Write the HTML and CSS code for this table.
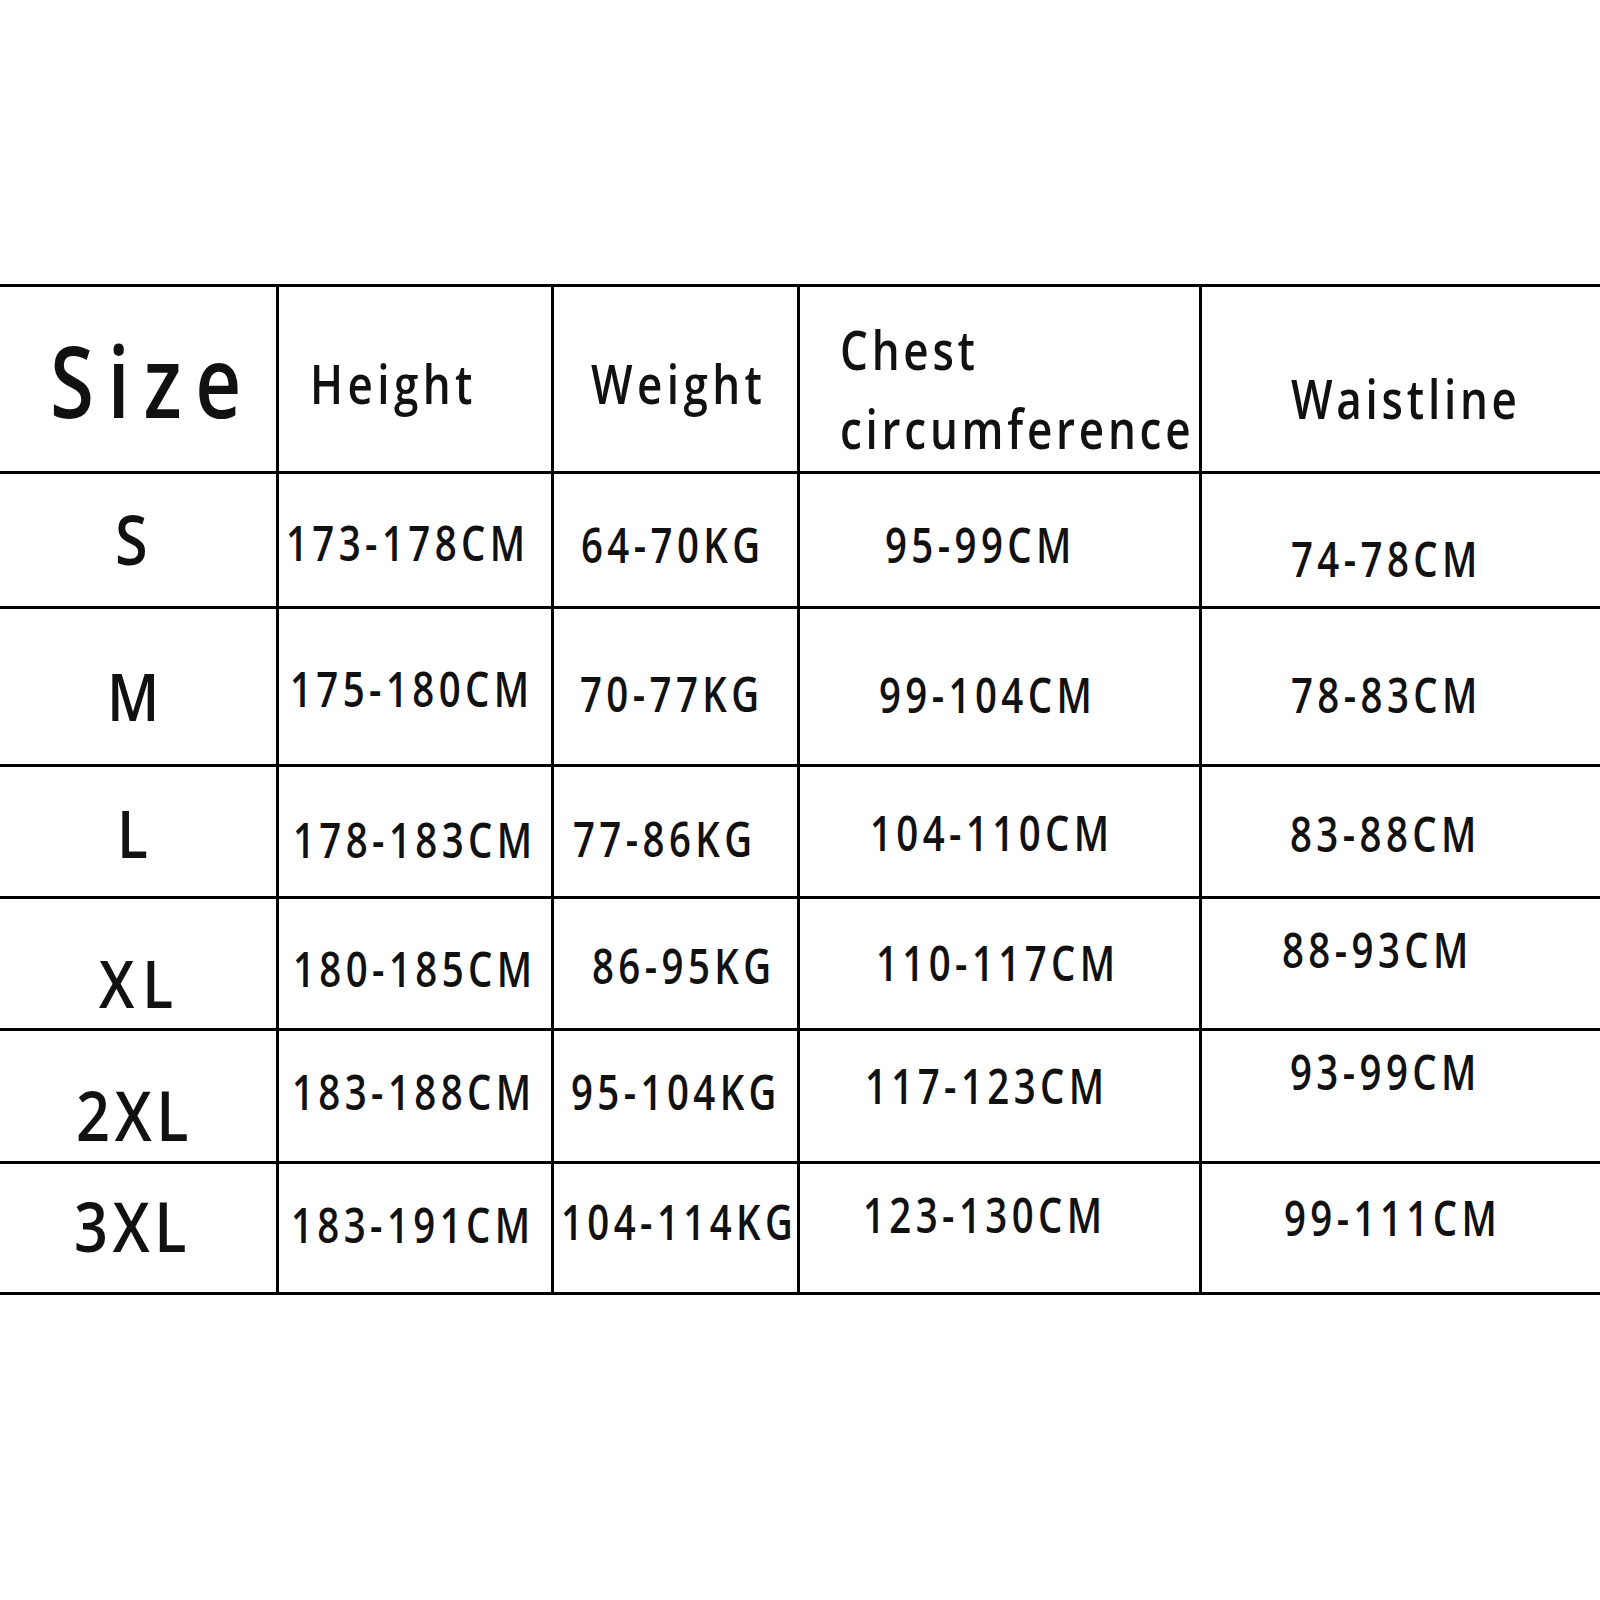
FILE: index.html
```html
<!DOCTYPE html>
<html lang="en">
<head>
<meta charset="utf-8">
<title>Size chart</title>
<link rel="stylesheet" href="styles.css">
</head>
<body>
<main class="page">
  <div class="chart">
    <div class="cell h-size"><span class="t label-xl">Size</span></div>
    <div class="cell h-height"><span class="t head">Height</span></div>
    <div class="cell h-weight"><span class="t head">Weight</span></div>
    <div class="cell h-chest"><span class="t head two">Chest<br>circumference</span></div>
    <div class="cell h-waist"><span class="t head tight">Waistline</span></div>

    <div class="cell s-l"><span class="t label big">S</span></div>
    <div class="cell s-h"><span class="t data">173-178CM</span></div>
    <div class="cell s-w"><span class="t data">64-70KG</span></div>
    <div class="cell s-c"><span class="t data">95-99CM</span></div>
    <div class="cell s-x"><span class="t data">74-78CM</span></div>

    <div class="cell m-l"><span class="t label">M</span></div>
    <div class="cell m-h"><span class="t data">175-180CM</span></div>
    <div class="cell m-w"><span class="t data">70-77KG</span></div>
    <div class="cell m-c"><span class="t data">99-104CM</span></div>
    <div class="cell m-x"><span class="t data">78-83CM</span></div>

    <div class="cell l-l"><span class="t label">L</span></div>
    <div class="cell l-h"><span class="t data">178-183CM</span></div>
    <div class="cell l-w"><span class="t data">77-86KG</span></div>
    <div class="cell l-c"><span class="t data">104-110CM</span></div>
    <div class="cell l-x"><span class="t data">83-88CM</span></div>

    <div class="cell xl-l"><span class="t label">XL</span></div>
    <div class="cell xl-h"><span class="t data">180-185CM</span></div>
    <div class="cell xl-w"><span class="t data">86-95KG</span></div>
    <div class="cell xl-c"><span class="t data">110-117CM</span></div>
    <div class="cell xl-x"><span class="t data">88-93CM</span></div>

    <div class="cell xxl-l"><span class="t label big">2XL</span></div>
    <div class="cell xxl-h"><span class="t data">183-188CM</span></div>
    <div class="cell xxl-w"><span class="t data">95-104KG</span></div>
    <div class="cell xxl-c"><span class="t data">117-123CM</span></div>
    <div class="cell xxl-x"><span class="t data">93-99CM</span></div>

    <div class="cell x3-l"><span class="t label big">3XL</span></div>
    <div class="cell x3-h"><span class="t data">183-191CM</span></div>
    <div class="cell x3-w"><span class="t data">104-114KG</span></div>
    <div class="cell x3-c"><span class="t data">123-130CM</span></div>
    <div class="cell x3-x"><span class="t data">99-111CM</span></div>
  </div>
</main>
</body>
</html>
```
FILE: styles.css
```css
html, body {
  margin: 0;
  padding: 0;
  background: #fff;
}

.page {
  width: 1600px;
  height: 1600px;
  padding-top: 284px;
  box-sizing: border-box;
  overflow: hidden;
}

.chart {
  display: grid;
  grid-template-columns: 276px 272px 243px 399px 398px;
  grid-template-rows: 184px 132px 155px 129px 129px 130px 128px;
  gap: 3px;
  padding: 3px 0;
  background: #000;
  width: 1600px;
}

.cell {
  background: #fff;
  box-sizing: border-box;
  overflow: visible;
  font-family: "Open Sans", "Noto Sans", sans-serif;
  color: #111;
}

.t {
  display: inline-block;
  white-space: nowrap;
  line-height: 1;
  transform: scaleX(0.8);
  transform-origin: 0 0;
  font-weight: 600;
}

.data {
  font-size: 48px;
  letter-spacing: 0.115em;
}

.head {
  font-size: 55px;
  letter-spacing: 0.1em;
}

.head.two,
.head.tight {
  letter-spacing: 0.085em;
}

.head.two {
  line-height: 79px;
}

.label-xl {
  font-size: 100px;
  letter-spacing: 0.17em;
}

.label {
  font-size: 66px;
  letter-spacing: 0.14em;
  transform: scaleX(0.86);
}

.label.big {
  font-size: 69px;
  letter-spacing: 0.08em;
}

/* header */
.h-size   { padding: 42px 0 0 50px; }
.h-height { padding: 68px 0 0 31px; }
.h-weight { padding: 68px 0 0 37px; }
.h-chest  { padding: 22px 0 0 40px; }
.h-waist  { padding: 83px 0 0 89px; }

/* S */
.s-l { padding: 30px 0 0 115px; }
.s-h { padding: 45px 0 0 7px; }
.s-w { padding: 47px 0 0 27px; }
.s-c { padding: 47px 0 0 85px; }
.s-x { padding: 61px 0 0 89px; }

/* M */
.m-l { padding: 53px 0 0 107px; }
.m-h { padding: 56px 0 0 11px; }
.m-w { padding: 61px 0 0 26px; }
.m-c { padding: 62px 0 0 79px; }
.m-x { padding: 62px 0 0 89px; }

/* L */
.l-l { padding: 32px 0 0 117px; }
.l-h { padding: 49px 0 0 14px; }
.l-w { padding: 48px 0 0 19px; }
.l-c { padding: 42px 0 0 70px; }
.l-x { padding: 43px 0 0 88px; }

/* XL */
.xl-l { padding: 50px 0 0 99px; }
.xl-h { padding: 46px 0 0 14px; }
.xl-w { padding: 43px 0 0 38px; }
.xl-c { padding: 40px 0 0 76px; }
.xl-x { padding: 27px 0 0 80px; }

/* 2XL */
.xxl-l { padding: 49px 0 0 76px; }
.xxl-h { padding: 37px 0 0 13px; }
.xxl-w { padding: 37px 0 0 17px; }
.xxl-c { padding: 31px 0 0 65px; }
.xxl-x { padding: 17px 0 0 88px; }

/* 3XL */
.x3-l { padding: 27px 0 0 74px; }
.x3-h { padding: 37px 0 0 12px; }
.x3-w { padding: 34px 0 0 7px; }
.x3-c { padding: 27px 0 0 63px; }
.x3-x { padding: 30px 0 0 82px; }
```
